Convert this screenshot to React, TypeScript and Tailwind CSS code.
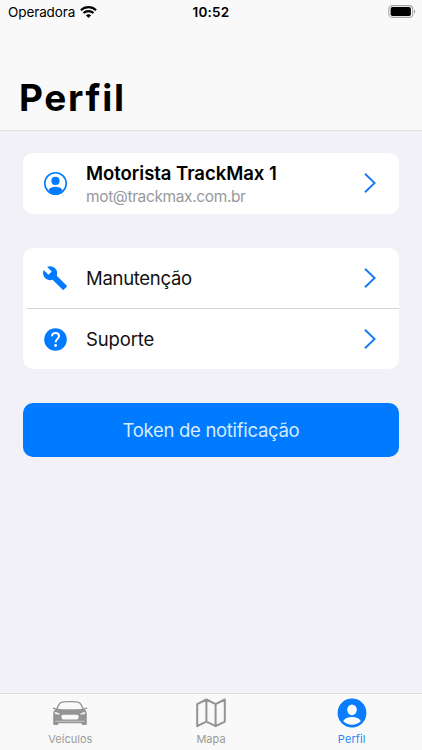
import type { ReactNode } from "react";

interface RowProps {
  icon: ReactNode;
  title: string;
  titleClass: string;
  subtitle?: string;
}

function Chevron() {
  return (
    <svg className="w-3 h-5 mr-[23px] -mt-px" viewBox="0 0 12 20" fill="none">
      <path d="M1 0.8L10.6 10L1 19.2" stroke="#1479f2" strokeWidth="1.9" />
    </svg>
  );
}

function Row({ icon, title, titleClass, subtitle }: RowProps) {
  return (
    <div className="flex items-center h-[61px] pl-5">
      <div className="w-[25px] h-[25px] -mt-px">{icon}</div>
      <div className="flex-1 ml-[18px] -mt-px whitespace-nowrap">
        <p className={titleClass}>{title}</p>
        {subtitle && <p className="text-[15.5px] leading-6 -mb-[3px] tracking-[-0.37px] text-[#98989c]">{subtitle}</p>}
      </div>
      <Chevron />
    </div>
  );
}

function StatusBar() {
  return (
    <div className="grid grid-cols-3 h-6 text-[13.5px] leading-6 text-black">
      <div className="flex items-center pl-2">
        <span className="tracking-[-0.1px]">Operadora</span>
        <svg className="w-[17px] h-3 ml-[5px]" viewBox="0 0 17 12" fill="none" stroke="#000" strokeWidth="2.1">
          <path d="M0.9 4.3C5.1 0.1 11.9 0.1 16.1 4.3" />
          <path d="M3.5 7.1C6.3 4.4 10.7 4.4 13.5 7.1" />
          <path d="M8.5 11.9L5.9 9.3C7.3 8 9.7 8 11.1 9.3Z" fill="#000" stroke="none" />
        </svg>
      </div>
      <span className="text-center font-semibold tracking-[0.2px]">10:52</span>
      <div className="flex justify-end pr-[6px] pt-[5px]">
        <svg className="w-7 h-[13px]" viewBox="0 0 28 13" fill="none">
          <rect x="0.8" y="0.6" width="23.9" height="11.8" rx="3.4" stroke="#a5a5a5" strokeWidth="1.1" />
          <rect x="2.6" y="2.1" width="20.3" height="8.9" rx="1.8" fill="#000" />
          <path d="M26 4.3C27.7 5 27.7 8 26 8.7Z" fill="#a5a5a5" />
        </svg>
      </div>
    </div>
  );
}

function UserIcon() {
  return (
    <svg className="w-full h-full" viewBox="0 0 25 25" fill="none">
      <circle cx="12.5" cy="12.5" r="10.7" stroke="#007aff" strokeWidth="1.6" />
      <circle cx="12.5" cy="9.9" r="4.1" fill="#007aff" />
      <path d="M5.5 19C7 16.7 9.6 15.8 12.5 15.8C15.4 15.8 18 16.7 19.5 19C18 21.8 15.5 23.1 12.5 23.1C9.5 23.1 7 21.8 5.5 19Z" fill="#007aff" />
    </svg>
  );
}

function WrenchIcon() {
  return (
    <svg className="w-[26px] h-[26px] -mt-px -ml-px" viewBox="0 0 24 24" fill="#007aff">
      <path d="M22.7 19l-9.1-9.1c.9-2.3.4-5-1.5-6.9-2-2-5-2.4-7.4-1.3L9 6 6 9 1.6 4.7C.4 7.1.9 10.1 2.9 12.1c1.9 1.9 4.6 2.4 6.9 1.5l9.1 9.1c.4.4 1 .4 1.4 0l2.3-2.3c.5-.4.5-1.1.1-1.4z" />
    </svg>
  );
}

function HelpIcon() {
  return (
    <svg className="w-[25px] h-[25px]" viewBox="0 0 25 25" fill="none">
      <circle cx="12.5" cy="12.5" r="11.3" fill="#007aff" />
      <path d="M9 9.3C9 7.1 10.5 5.9 12.5 5.9C14.5 5.9 16 7.2 16 9.1C16 11.8 12.6 12 12.6 15.3" stroke="#fff" strokeWidth="2" />
      <circle cx="12.6" cy="18.5" r="1.4" fill="#fff" />
    </svg>
  );
}

function CarIcon() {
  return (
    <svg className="w-9 h-[26px]" viewBox="0 0 36 26" fill="#949496">
      <path
        fillRule="evenodd"
        d="M8 2.3C10.5 0.7 25.5 0.7 28 2.3C29.5 3.5 30.8 6.4 31.7 8.4L34.3 7.4C35.4 7.4 35.4 9 34.6 9.1L32.5 9.3C34.3 10.7 34.8 12.3 34.8 15V23.4C34.8 24.8 34.3 25 33.4 25H31C30 25 29.6 24.4 29.6 23.2H6.4C6.4 24.4 6 25 5 25H2.6C1.7 25 1.2 24.8 1.2 23.4V15C1.2 12.3 1.7 10.7 3.5 9.3L1.4 9.1C0.6 9 0.6 7.4 1.7 7.4L4.3 8.4C5.2 6.4 6.5 3.5 8 2.3ZM8.9 3.2C7.7 4.2 6.5 6.8 5.7 8.8C10 9.5 26 9.5 30.3 8.8C29.5 6.8 28.3 4.2 27.1 3.2C24.5 2 11.5 2 8.9 3.2ZM2.8 12.1C2.7 13.2 3.2 14 4.2 14.3L8 14.6C8.4 14.2 7.2 13.2 5.8 12.7ZM33.2 12.1L30.2 12.7C28.8 13.2 27.6 14.2 28 14.6L31.8 14.3C32.8 14 33.3 13.2 33.2 12.1ZM11.5 14.8C9.4 14.8 9 16.3 9.6 18C10 19.3 10.8 19.6 12.2 19.6H23.8C25.2 19.6 26 19.3 26.4 18C27 16.3 26.6 14.8 24.5 14.8Z"
      />
      <path d="M3.2 21.3H32.8" stroke="#f9f9f9" strokeWidth="0.5" />
    </svg>
  );
}

function MapIcon() {
  return (
    <svg className="w-[30px] h-[30px]" viewBox="0 0 30 30" fill="none" stroke="#939393" strokeWidth="2" strokeLinejoin="round">
      <path d="M1.2 6.1L10.4 1.5L19.6 6.1L28.8 1.5V23.6L19.6 28.2L10.4 23.6L1.2 28.2ZM10.4 1.5V23.6M19.6 6.1V28.2" />
    </svg>
  );
}

function ProfileIcon() {
  return (
    <svg className="w-[30px] h-[30px]" viewBox="0 0 30 30">
      <circle cx="15" cy="15" r="14.4" fill="#0a7cff" />
      <ellipse cx="15" cy="11.8" rx="4.8" ry="5.4" fill="#fff" />
      <path d="M6.2 23C7.6 20.2 11 19 15 19C19 19 22.4 20.2 23.8 23C21.5 25.6 18.4 26.7 15 26.7C11.6 26.7 8.5 25.6 6.2 23Z" fill="#fff" />
    </svg>
  );
}

export default function App() {
  return (
    <div className="w-[422px] h-[750px] flex flex-col overflow-hidden bg-[#f1f1f7] font-['Inter',sans-serif]">
      <header className="h-[131px] shrink-0 bg-[#f9f9f9] border-b border-[#dedee1]">
        <StatusBar />
        <h1 className="mt-[50px] pl-[19px] text-[37px] leading-[48px] font-bold tracking-[1.7px] text-black">Perfil</h1>
      </header>

      <main className="flex-1 px-[23px] pt-[22px]">
        <div className="bg-white rounded-[10px]">
          <Row
            icon={<UserIcon />}
            title="Motorista TrackMax 1"
            titleClass="text-[18.5px] leading-6 font-semibold tracking-[-0.03px] text-black"
            subtitle="mot@trackmax.com.br"
          />
        </div>

        <div className="mt-[34px] h-[121px] bg-white rounded-[10px]">
          <Row icon={<WrenchIcon />} title="Manutenção" titleClass="text-[18.5px] leading-6 tracking-[-0.3px] text-[#111]" />
          <div className="h-px ml-1 -mt-px bg-[#d5d5d8]"></div>
          <Row icon={<HelpIcon />} title="Suporte" titleClass="text-[18.5px] leading-6 tracking-[-0.15px] text-[#111]" />
        </div>

        <button className="mt-[34px] w-full h-[54px] pt-0.5 rounded-[10px] bg-[#007aff] text-[18.5px] tracking-[-0.3px] text-[#d6ecff]">
          Token de notificação
        </button>
      </main>

      <nav className="h-[57px] shrink-0 grid grid-cols-3 bg-[#f9f9f9] border-t border-[#dcdcdf] text-[11px] leading-[14px] text-[#999]">
        <div className="flex flex-col items-center pt-1">
          <div className="h-[30px] flex items-center"><CarIcon /></div>
          <span className="mt-[4px] tracking-[0px]">Veículos</span>
        </div>
        <div className="flex flex-col items-center pt-1">
          <MapIcon />
          <span className="mt-[4px] tracking-[0px]">Mapa</span>
        </div>
        <div className="flex flex-col items-center pt-1 text-[#2688f5]">
          <ProfileIcon />
          <span className="mt-[4px] tracking-[0.1px]">Perfil</span>
        </div>
      </nav>
    </div>
  );
}
